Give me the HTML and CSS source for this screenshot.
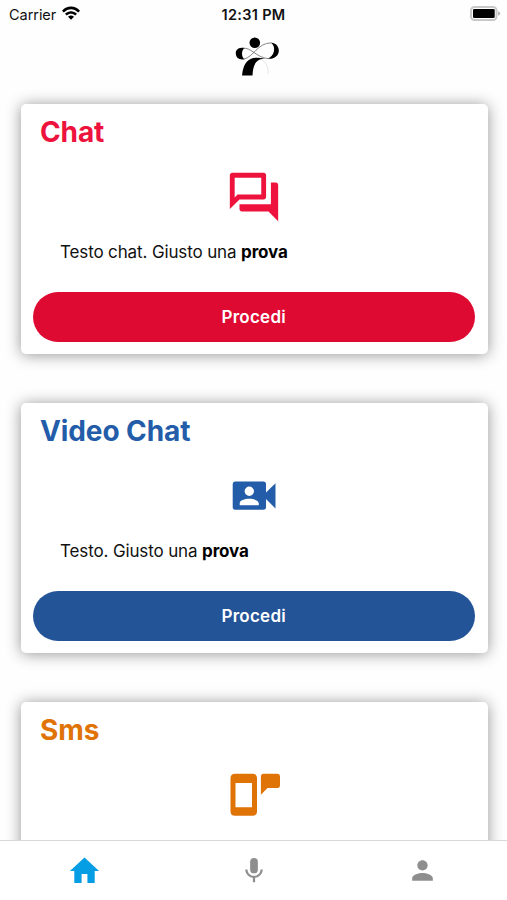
FILE: index.html
```html
<!DOCTYPE html>
<html lang="it">
<head>
    <meta charset="UTF-8">
    <meta name="viewport" content="width=device-width, initial-scale=1.0">
    <title>Home</title>
    <link rel="stylesheet" href="styles.css">
</head>
<body>

    <!-- Status bar -->
    <div class="status-bar">
        <div class="carrier">
            <span>Carrier</span>
            <svg class="wifi" viewBox="0 0 18 14">
                <path d="M0 4.7C5 -.9 13 -.9 18 4.7L16.2 6.5C12 2 6 2 1.8 6.5zM3 7.7C6.3 4.3 11.7 4.3 15 7.7L13.2 9.5C10.8 7.1 7.2 7.1 4.8 9.5zM6 10.7C7.8 9.1 10.2 9.1 12 10.7L9 13.7z"/>
            </svg>
        </div>
        <div class="time">12:31 PM</div>
        <svg class="battery" viewBox="0 0 32 16">
            <rect x="2" y="1" width="25.5" height="13" rx="3.5" fill="#fff" stroke="#c8c8c8" stroke-width="2"/>
            <rect x="4" y="3" width="21.7" height="9" rx="1.2"/>
            <path d="M29 5.3Q31.2 6 31.2 7.5T29 9.7z" fill="#b5b5b5"/>
        </svg>
    </div>

    <header class="header">
        <svg class="logo" viewBox="0 0 64 54">
            <circle cx="29.8" cy="12.7" r="5.3"/>
            <path d="M19.5 18C13 16.5 10.5 20.5 10.8 23.5C11 28 14.5 30.2 19.5 29.2C16.5 27.5 16 20.5 19.5 18z"/>
            <path d="M46 12.7C52 13 54 17.5 53.8 21C53.5 26 49 29.5 42.5 28.7C49.5 26.5 51.5 16.5 46 12.7z"/>
            <path d="M40 28.5C29 26.5 19 26.5 17 45.5H27.5C28 35 30.5 29 40 28.5z"/>
            <path class="logo-line" d="M18 18.3C26 17 31 27.5 43.5 28.7M18.5 29.2C29 27 32 13 46.5 12.8"/>
            <path class="logo-line thin" d="M35 29C41 31 43.5 37 43 44"/>
        </svg>
    </header>

    <!-- Cards -->
    <main class="cards">
        <section class="card chat">
            <h2>Chat</h2>
            <svg class="card-icon" viewBox="0 0 24 24">
                <path d="M15 4v7H5.17L4 12.17V4h11m1-2H3c-.55 0-1 .45-1 1v14l4-4h10c.55 0 1-.45 1-1V3c0-.55-.45-1-1-1zm5 4h-2v9H6v2c0 .55.45 1 1 1h11l4 4V7c0-.55-.45-1-1-1z"/>
            </svg>
            <p>Testo chat. Giusto una <b>prova</b></p>
            <button class="btn">Procedi</button>
        </section>

        <section class="card video">
            <h2>Video Chat</h2>
            <svg class="card-icon" viewBox="0 0 58 58">
                <path fill-rule="evenodd" d="M10 14.5H38.5Q41 14.5 41 17V25.5L50.5 16.3V41.5L41 32V40Q41 42.7 38.5 42.7H10Q7.7 42.7 7.7 40V17Q7.7 14.5 10 14.5zM24.3 19.5A4.7 4.7 0 1 0 24.3 28.9A4.7 4.7 0 1 0 24.3 19.5zM14.7 38.2H33.8V36.5C33.8 30.3 14.7 30.3 14.7 36.5z"/>
            </svg>
            <p>Testo. Giusto una <b>prova</b></p>
            <button class="btn">Procedi</button>
        </section>

        <section class="card sms">
            <h2>Sms</h2>
            <svg class="card-icon" viewBox="0 0 58 58">
                <path fill-rule="evenodd" d="M10 7.8H27.5Q32 7.8 32 12.3V45.3Q32 49.8 27.5 49.8H10Q5.5 49.8 5.5 45.3V12.3Q5.5 7.8 10 7.8zM10.5 17V41.3H27V17z"/>
                <path d="M38.5 7.8H52Q55 7.8 55 10.8V19.3Q55 22.1 52 22.1H42.5L35.9 28.8V10.8Q35.9 7.8 38.5 7.8z"/>
            </svg>
        </section>
    </main>

    <!-- Tab bar -->
    <nav class="tab-bar">
        <a class="tab active">
            <svg viewBox="0 0 24 24" width="35" height="36" preserveAspectRatio="none"><path d="M10 20v-6h4v6h5v-8h3L12 3 2 12h3v8z"/></svg>
        </a>
        <a class="tab">
            <svg viewBox="0 0 24 24" width="30" height="30">
                <rect x="8.9" y="1.5" width="6.2" height="12.3" rx="3.1"/>
                <path d="M17.2 10.7c0 3-2.4 5.1-5.2 5.1s-5.2-2.1-5.2-5.1H5c0 3.4 2.7 6.2 6.1 6.7V21h1.8V17.4c3.4-.5 6.1-3.3 6.1-6.7z"/>
            </svg>
        </a>
        <a class="tab">
            <svg viewBox="0 0 24 24" width="31" height="31"><path d="M12 12c2.21 0 4-1.79 4-4s-1.79-4-4-4-4 1.79-4 4 1.79 4 4 4zm0 2c-2.67 0-8 1.34-8 4v2h16v-2c0-2.66-5.33-4-8-4z"/></svg>
        </a>
    </nav>

</body>
</html>
```
FILE: styles.css
```css
:root {
    --color-chat: #ed133d;
    --color-chat-button: #df0a32;
    --color-video: #235ca9;
    --color-video-button: #245498;
    --color-sms: #e07306;
    --color-active: #059ee5;
    --color-inactive: #8e8e8e;
}

* {
    margin: 0;
    padding: 0;
    box-sizing: border-box;
}

body {
    display: flex;
    flex-direction: column;
    height: 100vh;
    overflow: hidden;
    background-color: #fefefe;
    color: #111;
    font-family: Inter, sans-serif;
}

svg {
    display: block;
    flex-shrink: 0;
}

/* Status bar */
.status-bar {
    display: grid;
    grid-template-columns: 1fr auto 1fr;
    align-items: center;
    height: 28px;
    padding: 0 6px 0 9px;
    font-size: 14.5px;
}

.carrier {
    display: flex;
    align-items: center;
    gap: 6px;
    letter-spacing: -0.05px;
}

.wifi {
    width: 18px;
    height: 14px;
    margin-top: -2px;
}

.time {
    padding-right: 3px;
    font-weight: 600;
    font-size: 14.5px;
    letter-spacing: 0.3px;
}

.battery {
    width: 32px;
    height: 16px;
    justify-self: end;
}

/* Header */
.header {
    display: flex;
    justify-content: center;
    flex-shrink: 0;
    height: 58px;
    padding: 2px 0 0 6px;
}

.logo {
    width: 64px;
    height: 54px;
}

.logo-line {
    fill: none;
    stroke: #555;
    stroke-width: 0.7;
}

.thin {
    stroke: #ccc;
    stroke-width: 0.5;
}

/* Cards */
.cards {
    display: flex;
    flex-direction: column;
    flex: 1;
    gap: 49px;
    min-height: 0;
    padding: 17.5px 19.5px 0 20.5px;
    overflow: hidden;
}

.card {
    display: flex;
    flex-direction: column;
    flex-shrink: 0;
    height: 250.3px;
    padding: 10px 12.5px 12px 12px;
    background-color: #fff;
    border-radius: 5px;
    box-shadow: 0 1px 15px rgba(0, 0, 0, 0.42);
}

.card h2 {
    height: 36px;
    padding-left: 7.5px;
    font-size: 28px;
    font-weight: 700;
    letter-spacing: -0.1px;
    line-height: 36px;
}

.card-icon {
    width: 58px;
    height: 58px;
    margin: 18px auto 0;
    fill: currentColor;
}

.card p {
    margin-top: 13.5px;
    padding-left: 27.5px;
    color: #111;
    font-size: 17px;
    letter-spacing: -0.13px;
    line-height: 26px;
}

.card b {
    color: #000;
}

.btn {
    height: 50px;
    margin-top: auto;
    border: none;
    border-radius: 25px;
    color: #fff;
    font-family: inherit;
    font-size: 17px;
    font-weight: 600;
    letter-spacing: 0.25px;
}

.chat {
    color: var(--color-chat);
}

.chat .btn {
    background-color: var(--color-chat-button);
}

.video {
    color: var(--color-video);
}

.video .btn {
    background-color: var(--color-video-button);
}

.sms {
    color: var(--color-sms);
}

/* Tab bar */
.tab-bar {
    display: flex;
    flex-shrink: 0;
    height: 60px;
    background-color: #fff;
    border-top: 1px solid #d8d8d8;
}

.tab {
    display: flex;
    flex: 1;
    align-items: center;
    justify-content: center;
    color: var(--color-inactive);
    fill: currentColor;
}

.active {
    color: var(--color-active);
}
```
